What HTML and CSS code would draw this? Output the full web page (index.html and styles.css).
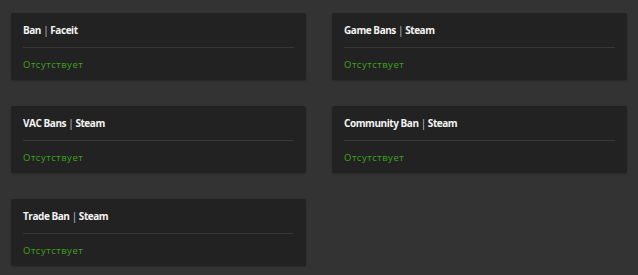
FILE: index.html
```html
<!DOCTYPE html>
<html lang="en">
<head>
  <meta charset="UTF-8" />
  <title>Bans</title>
  <link rel="stylesheet" href="styles.css">
</head>
<body>
  <div class="ban-grid">
    <div class="ban-card">
      <div class="ban-title">Ban <span class="sep">|</span> Faceit</div>
      <div class="ban-status">Отсутствует</div>
    </div>
    <div class="ban-card">
      <div class="ban-title">Game Bans <span class="sep">|</span> Steam</div>
      <div class="ban-status">Отсутствует</div>
    </div>
    <div class="ban-card">
      <div class="ban-title">VAC Bans <span class="sep">|</span> Steam</div>
      <div class="ban-status">Отсутствует</div>
    </div>
    <div class="ban-card">
      <div class="ban-title">Community Ban <span class="sep">|</span> Steam</div>
      <div class="ban-status">Отсутствует</div>
    </div>
    <div class="ban-card">
      <div class="ban-title">Trade Ban <span class="sep">|</span> Steam</div>
      <div class="ban-status">Отсутствует</div>
    </div>
  </div>
</body>
</html>
```

FILE: styles.css
```css
body {
  margin: 0;
  background: #333333;
  font-family: 'Open Sans', 'Liberation Sans', sans-serif;
}

.ban-grid {
  display: grid;
  grid-template-columns: 295px 295px;
  column-gap: 26px;
  row-gap: 26px;
  padding: 13px 11px;
}

.ban-card {
  background: #222222;
  border-radius: 2px;
  height: 67px;
  box-sizing: border-box;
  padding: 10px 12px 0;
  box-shadow: 0 1px 2px rgba(0, 0, 0, 0.2);
}

.ban-title {
  color: #f4f4f4;
  font-size: 10px;
  font-weight: 700;
  letter-spacing: -0.45px;
  line-height: 14px;
  padding-bottom: 10px;
  border-bottom: 1px solid #383838;
}

.ban-title .sep {
  font-weight: 400;
  color: #c8c8c8;
}

.ban-status {
  color: #3fa21b;
  font-size: 9.5px;
  letter-spacing: 0.5px;
  line-height: 12px;
  margin-top: 11px;
}
```
